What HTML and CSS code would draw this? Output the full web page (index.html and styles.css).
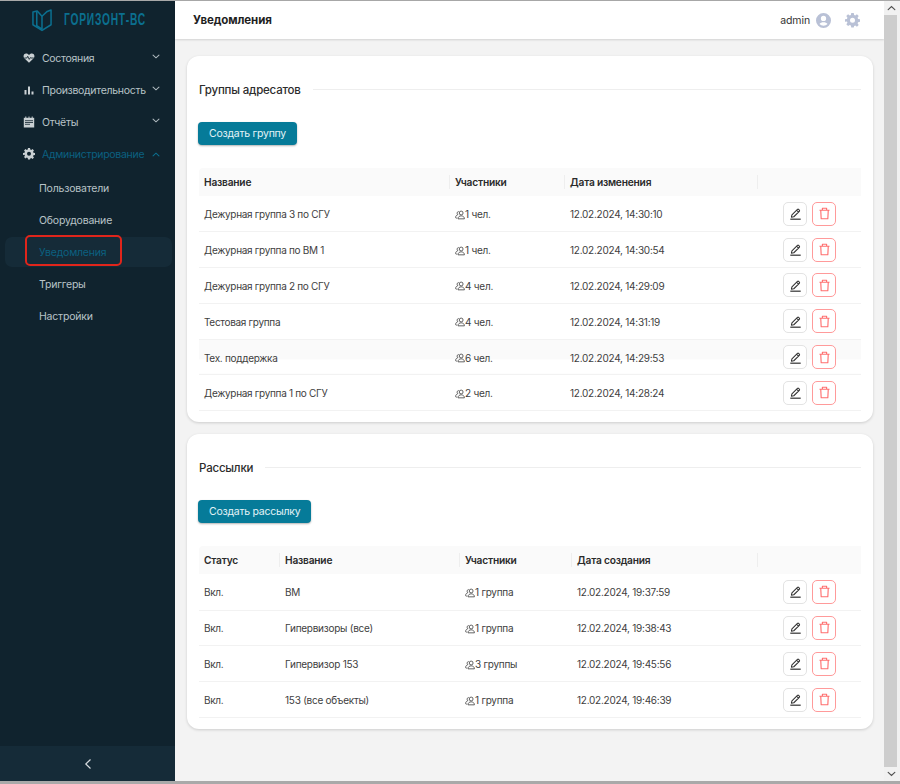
FILE: index.html
```html
<!DOCTYPE html>
<html lang="ru">
<head>
<meta charset="utf-8">
<title>Уведомления</title>
<link rel="stylesheet" href="styles.css">
</head>
<body>
<svg class="defs" width="0" height="0" aria-hidden="true">
  <defs>
    <symbol id="i-users" viewBox="0 0 12 12">
      <circle cx="7.4" cy="3.6" r="2.3" fill="none" stroke="currentColor" stroke-width="1"/>
      <path d="M3.600 10.600c0-2.200 1.600-3.600 3.800-3.600s3.900 1.400 3.900 3.600z" fill="none" stroke="currentColor" stroke-width="1"/>
      <path d="M4.400 1.700A2.200 2.200 0 0 0 3.400 5.600c-1.600.5-2.600 1.700-2.700 3.200 0 .6.3.9.9.9h1" fill="none" stroke="currentColor" stroke-width="1"/>
    </symbol>
    <symbol id="i-edit" viewBox="0 0 16 16">
      <path d="M3.600 9.800 10.400 3a1 1 0 0 1 1.400 0l.9.900a1 1 0 0 1 0 1.400L5.900 12l-2.900.5zM9.400 4l2.300 2.300" fill="none" stroke="currentColor" stroke-width="1.300" stroke-linejoin="round"/>
      <path d="M1.600 15h12.800" stroke="currentColor" stroke-width="1.500"/>
    </symbol>
    <symbol id="i-trash" viewBox="0 0 16 16">
      <path d="M1.800 4h12.400M5.400 3.800V1.600h5.200v2.200M3.400 4.200l.5 10.200h8.200l.5-10.200" fill="none" stroke="currentColor" stroke-width="1.400" stroke-linejoin="round"/>
    </symbol>
    <symbol id="i-chev" viewBox="0 0 10 6">
      <path d="M1.300 1.200 5 4.600l3.700-3.400" fill="none" stroke="currentColor" stroke-width="1.300" stroke-linecap="round"/>
    </symbol>
    <symbol id="i-gear" viewBox="0 0 24 24">
      <path fill-rule="evenodd" d="M10 1h4l.6 3.100 1.900.8L19.100 3.100l2.800 2.800-1.800 2.600.8 1.900L24 11v4l-3.100.6-.8 1.900 1.800 2.600-2.800 2.800-2.600-1.800-1.900.8L14 24h-4l-.6-3.100-1.900-.8-2.600 1.800-2.800-2.800 1.800-2.600-.8-1.900L0 15v-4l3.100-.6.800-1.900L2.100 5.900l2.800-2.800 2.600 1.800 1.900-.8zM12 8.500a4 4 0 1 0 0 8 4 4 0 0 0 0-8z" transform="translate(0 -1)"/>
    </symbol>
  </defs>
</svg>
<div class="window">
  <aside class="sidebar">
    <div class="logo">
      <svg class="logo-mark" width="20" height="24" viewBox="0 0 21 24">
        <path d="M1 3.500v13.500l9.500 6 9.500-6V1.500l-4 1.500-5.500 5L5.500 2.500z" fill="none" stroke="#0b6f8f" stroke-width="1.600" stroke-linejoin="round"/>
        <path d="M5 3v15l5.500 3.500M10.500 8v13.500" fill="none" stroke="#0b6f8f" stroke-width="1.600"/>
      </svg>
      <span class="logo-text">ГОРИЗОНТ-ВС</span>
    </div>
    <nav class="menu">
      <div class="item">
        <svg class="item-icon" viewBox="0 0 14 14" width="12" height="12"><path d="M7 12.600 1.500 7.200C-.2 5.300.7 1.800 3.700 1.800c1.400 0 2.500.7 3.300 1.800.8-1.100 1.900-1.800 3.300-1.800 3 0 3.900 3.500 2.200 5.400z" fill="#c9d0d3"/><path d="M1.500 7h3l1-2 1.800 3.600L8.600 6.500 9.300 7h3.300" fill="none" stroke="#10232e" stroke-width="1"/></svg>
        <span class="item-label">Состояния</span>
        <svg class="chev" width="8" height="5"><use href="#i-chev"/></svg>
      </div>
      <div class="item">
        <svg class="item-icon" viewBox="0 0 12 12" width="12" height="12"><path d="M1.500 6h2v4.500h-2zM5 2.500h2v8H5zM8.500 7.500h2v3h-2z" fill="#c9d0d3"/></svg>
        <span class="item-label">Производительность</span>
        <svg class="chev" width="8" height="5"><use href="#i-chev"/></svg>
      </div>
      <div class="item">
        <svg class="item-icon" viewBox="0 0 12 12" width="12" height="12"><path d="M.8 1.800h10.400v9.700H.8z" fill="#c9d0d3"/><path d="M2.800.5v2.500M6 .5v2.500M9.200.5v2.500" stroke="#c9d0d3" stroke-width="1"/><path d="M2 4.700h8M2 6.500h8M2 8.300h5" stroke="#10232e" stroke-width=".8"/></svg>
        <span class="item-label">Отчёты</span>
        <svg class="chev" width="8" height="5"><use href="#i-chev"/></svg>
      </div>
      <div class="item active">
        <svg class="item-icon gear-s" width="12" height="12"><use href="#i-gear"/></svg>
        <span class="item-label">Администрирование</span>
        <svg class="chev up" width="8" height="5"><use href="#i-chev"/></svg>
      </div>
      <div class="sub">Пользователи</div>
      <div class="sub">Оборудование</div>
      <div class="sub current"><span class="marker">Уведомления</span></div>
      <div class="sub">Триггеры</div>
      <div class="sub">Настройки</div>
    </nav>
    <div class="collapse">
      <svg width="8" height="12" viewBox="0 0 8 12"><path d="M6.500 1.500 1.800 6l4.700 4.500" fill="none" stroke="#d5dbde" stroke-width="1.200"/></svg>
    </div>
  </aside>
  <div class="main">
    <header class="topbar">
      <h1 class="page-title">Уведомления</h1>
      <div class="user">
        <span class="user-name">admin</span>
        <svg class="user-icon" width="15" height="15" viewBox="0 0 16 16"><path fill-rule="evenodd" d="M8 0a8 8 0 1 1 0 16A8 8 0 0 1 8 0zm0 3a2.800 2.800 0 1 0 0 5.600A2.800 2.800 0 0 0 8 3zm0 6.800c-1.900 0-3.500.7-4.300 2a5.800 5.800 0 0 0 8.600 0c-.8-1.300-2.400-2-4.300-2z" fill="#b9c1d6"/></svg>
        <svg class="user-gear" width="15" height="15"><use href="#i-gear"/></svg>
      </div>
    </header>
    <main class="content">
      <section class="card">
        <div class="card-head"><h2>Группы адресатов</h2><span class="rule"></span></div>
        <button class="primary" type="button">Создать группу</button>
        <table class="grid">
          <colgroup><col class="g1"><col class="g2"><col class="g3"><col class="act"></colgroup>
          <thead><tr><th>Название</th><th>Участники</th><th>Дата изменения</th><th></th></tr></thead>
          <tbody>
            <tr><td>Дежурная группа 3 по СГУ</td><td><svg class="who" width="11" height="11"><use href="#i-users"/></svg>1 чел.</td><td>12.02.2024, 14:30:10</td><td class="acts"><span class="btns"><span class="ib"><svg width="15" height="15"><use href="#i-edit"/></svg></span><span class="ib del"><svg width="15" height="15"><use href="#i-trash"/></svg></span></span></td></tr>
            <tr><td>Дежурная группа по ВМ 1</td><td><svg class="who" width="11" height="11"><use href="#i-users"/></svg>1 чел.</td><td>12.02.2024, 14:30:54</td><td class="acts"><span class="btns"><span class="ib"><svg width="15" height="15"><use href="#i-edit"/></svg></span><span class="ib del"><svg width="15" height="15"><use href="#i-trash"/></svg></span></span></td></tr>
            <tr><td>Дежурная группа 2 по СГУ</td><td><svg class="who" width="11" height="11"><use href="#i-users"/></svg>4 чел.</td><td>12.02.2024, 14:29:09</td><td class="acts"><span class="btns"><span class="ib"><svg width="15" height="15"><use href="#i-edit"/></svg></span><span class="ib del"><svg width="15" height="15"><use href="#i-trash"/></svg></span></span></td></tr>
            <tr><td>Тестовая группа</td><td><svg class="who" width="11" height="11"><use href="#i-users"/></svg>4 чел.</td><td>12.02.2024, 14:31:19</td><td class="acts"><span class="btns"><span class="ib"><svg width="15" height="15"><use href="#i-edit"/></svg></span><span class="ib del"><svg width="15" height="15"><use href="#i-trash"/></svg></span></span></td></tr>
            <tr class="hover"><td>Тех. поддержка</td><td><svg class="who" width="11" height="11"><use href="#i-users"/></svg>6 чел.</td><td>12.02.2024, 14:29:53</td><td class="acts"><span class="btns"><span class="ib"><svg width="15" height="15"><use href="#i-edit"/></svg></span><span class="ib del"><svg width="15" height="15"><use href="#i-trash"/></svg></span></span></td></tr>
            <tr><td>Дежурная группа 1 по СГУ</td><td><svg class="who" width="11" height="11"><use href="#i-users"/></svg>2 чел.</td><td>12.02.2024, 14:28:24</td><td class="acts"><span class="btns"><span class="ib"><svg width="15" height="15"><use href="#i-edit"/></svg></span><span class="ib del"><svg width="15" height="15"><use href="#i-trash"/></svg></span></span></td></tr>
          </tbody>
        </table>
      </section>
      <section class="card">
        <div class="card-head"><h2>Рассылки</h2><span class="rule"></span></div>
        <button class="primary" type="button">Создать рассылку</button>
        <table class="grid">
          <colgroup><col class="m1"><col class="m2"><col class="m3"><col class="m4"><col class="act"></colgroup>
          <thead><tr><th>Статус</th><th>Название</th><th>Участники</th><th>Дата создания</th><th></th></tr></thead>
          <tbody>
            <tr><td>Вкл.</td><td>ВМ</td><td><svg class="who" width="11" height="11"><use href="#i-users"/></svg>1 группа</td><td>12.02.2024, 19:37:59</td><td class="acts"><span class="btns"><span class="ib"><svg width="15" height="15"><use href="#i-edit"/></svg></span><span class="ib del"><svg width="15" height="15"><use href="#i-trash"/></svg></span></span></td></tr>
            <tr><td>Вкл.</td><td>Гипервизоры (все)</td><td><svg class="who" width="11" height="11"><use href="#i-users"/></svg>1 группа</td><td>12.02.2024, 19:38:43</td><td class="acts"><span class="btns"><span class="ib"><svg width="15" height="15"><use href="#i-edit"/></svg></span><span class="ib del"><svg width="15" height="15"><use href="#i-trash"/></svg></span></span></td></tr>
            <tr><td>Вкл.</td><td>Гипервизор 153</td><td><svg class="who" width="11" height="11"><use href="#i-users"/></svg>3 группы</td><td>12.02.2024, 19:45:56</td><td class="acts"><span class="btns"><span class="ib"><svg width="15" height="15"><use href="#i-edit"/></svg></span><span class="ib del"><svg width="15" height="15"><use href="#i-trash"/></svg></span></span></td></tr>
            <tr><td>Вкл.</td><td>153 (все объекты)</td><td><svg class="who" width="11" height="11"><use href="#i-users"/></svg>1 группа</td><td>12.02.2024, 19:46:39</td><td class="acts"><span class="btns"><span class="ib"><svg width="15" height="15"><use href="#i-edit"/></svg></span><span class="ib del"><svg width="15" height="15"><use href="#i-trash"/></svg></span></span></td></tr>
          </tbody>
        </table>
      </section>
    </main>
  </div>
  <div class="scrollbar">
    <div class="sb-btn"><svg class="sb-up" width="9" height="6"><use href="#i-chev"/></svg></div>
    <div class="sb-track"></div>
    <div class="sb-btn"><svg width="9" height="6"><use href="#i-chev"/></svg></div>
  </div>
</div>
</body>
</html>
```
FILE: styles.css
```css
* { box-sizing: border-box; }
html, body { margin: 0; padding: 0; }
body {
  width: 900px;
  height: 784px;
  overflow: hidden;
  background: #a9a9a9;
  font-family: "Inter", "Noto Sans", sans-serif;
  font-size: 10.500px;
  letter-spacing: -.3px;
  color: #3a3a3a;
}
.defs { position: absolute; }
.window {
  display: flex;
  width: 900px;
  height: 780px;
  margin-top: 1px;
  background: #f3f3f3;
}
.sidebar {
  width: 175px;
  flex: none;
  display: flex;
  flex-direction: column;
  background: #10232e;
  color: #b9c3c8;
}
.logo {
  height: 38px;
  flex: none;
  display: flex;
  align-items: center;
  gap: 12px;
  padding-left: 32px;
}
.logo-mark { flex: none; }
.logo-text {
  display: inline-block;
  font-family: "Liberation Sans", sans-serif;
  font-size: 16px;
  font-weight: 700;
  letter-spacing: 1.200px;
  color: #0b6f8f;
  white-space: nowrap;
  transform: scaleX(.64);
  transform-origin: left center;
}
.menu { flex: 1; padding-top: 3px; }
.item {
  height: 32px;
  display: flex;
  align-items: center;
  padding-left: 23px;
  padding-right: 15px;
}
.item-icon { flex: none; color: #c9d0d3; fill: currentColor; }
.item-label { margin-left: 7px; flex: 1; white-space: nowrap; }
.chev { flex: none; color: #aeb9be; margin-top: -4px; }
.item.active { color: #0b6080; margin-bottom: 2px; }
.item.active .chev { color: #0b6f8f; margin-top: 0; }
.chev.up { transform: rotate(180deg); }
.sub {
  height: 32px;
  margin: 0 3px 0 5px;
  padding-left: 34px;
  display: flex;
  align-items: center;
  letter-spacing: -.2px;
}
.sub.current {
  height: 30px;
  margin-top: 1px;
  margin-bottom: 1px;
  background: #152b38;
  border-radius: 7px;
  color: #0b6080;
  position: relative;
}
.marker::after {
  content: "";
  position: absolute;
  box-sizing: border-box;
  left: 20px;
  top: -2px;
  width: 97px;
  height: 31px;
  border: 2px solid #e0251b;
  border-radius: 5px;
}
.collapse {
  height: 35px;
  flex: none;
  display: flex;
  align-items: center;
  justify-content: center;
  background: #152b38;
}
.main {
  flex: 1;
  min-width: 0;
  display: flex;
  flex-direction: column;
}
.topbar {
  height: 38px;
  flex: none;
  display: flex;
  align-items: center;
  justify-content: space-between;
  padding: 0 24px 0 18px;
  background: #fff;
  box-shadow: 0 1px 2px rgba(0, 0, 0, .14);
}
.page-title { margin: 0; font-size: 11.500px; font-weight: 700; color: #1f1f1f; letter-spacing: -.1px; }
.user { display: flex; align-items: center; }
.user-name { font-size: 10.500px; color: #333; letter-spacing: -.1px; }
.user-icon { margin-left: 6px; }
.user-gear { margin-left: 14px; fill: #b9c1d6; color: #b9c1d6; }
.content {
  flex: 1;
  padding: 17px 11px 0 12px;
}
.card {
  background: #fff;
  border-radius: 12px;
  box-shadow: 0 1px 3px rgba(0, 0, 0, .16);
  padding: 23.500px 12px 11px;
  margin-bottom: 12px;
}
.card-head {
  display: flex;
  align-items: center;
  gap: 12px;
  height: 20px;
}
.card-head h2 { margin: 0; font-size: 11.500px; font-weight: 500; color: #2c2c2c; letter-spacing: -.2px; }
.rule { flex: 1; height: 1px; background: #eee; }
.primary {
  display: block;
  margin: 22.500px 0 23px -1px;
  height: 23px;
  padding: 0 11px;
  border: 0;
  border-radius: 4px;
  background: #067b99;
  box-shadow: 0 1px 2px rgba(0, 0, 0, .3);
  color: #e4f3f7;
  font: inherit;
  letter-spacing: -.25px;
}
.grid {
  width: 662px;
  table-layout: fixed;
  border-collapse: collapse;
}
.g1 { width: 250px; }
.g2 { width: 115px; }
.g3 { width: 193px; }
.m1 { width: 80px; }
.m2 { width: 180px; }
.m3 { width: 112px; }
.m4 { width: 186px; }
.act { width: 104px; }
.grid th {
  height: 28px;
  padding: 0 6px;
  background: #fafafa;
  text-align: left;
  font-size: 10.200px;
  font-weight: 600;
  letter-spacing: -.2px;
  color: #2a2a2a;
  position: relative;
}
.grid th:first-child, .grid td:first-child { padding-left: 5px; }
.grid th:first-child { border-radius: 4px 0 0 0; }
.grid th + th::before {
  content: "";
  position: absolute;
  left: 0;
  top: 7px;
  width: 1px;
  height: 14px;
  background: #eeeeee;
}
.grid td {
  height: 35.800px;
  padding: 1px 6px 0;
  border-bottom: 1px solid #f2f2f2;
  color: #3e3e3e;
  font-size: 10px;
  letter-spacing: -.25px;
  white-space: nowrap;
}
.grid td:first-child { letter-spacing: -.3px; }
.grid .hover td { background: linear-gradient(#fafafa 0, #fafafa 20px, #fff 20px); }
.who { width: 10px; height: 10px; vertical-align: -1.500px; color: #444; }
.grid td.acts { padding: 0 0 0 26px; }
.btns { display: flex; gap: 5px; }
.ib {
  width: 24px;
  height: 24px;
  display: flex;
  align-items: center;
  justify-content: center;
  border: 1px solid #e3e3e3;
  border-radius: 5px;
  background: #fff;
  color: #333;
}
.ib svg { width: 13px; height: 13px; }
.ib.del { border-color: #ff9a9a; color: #ff6f6f; }
.scrollbar {
  width: 16px;
  flex: none;
  display: flex;
  flex-direction: column;
  background: #f1f1f1;
  color: #505050;
}
.sb-btn {
  height: 14px;
  flex: none;
  padding-right: 2px;
  display: flex;
  align-items: center;
  justify-content: center;
}
.sb-up { transform: rotate(180deg); }
.sb-track { flex: 1; margin-right: 3px; background: #cdcdcd; }
```
